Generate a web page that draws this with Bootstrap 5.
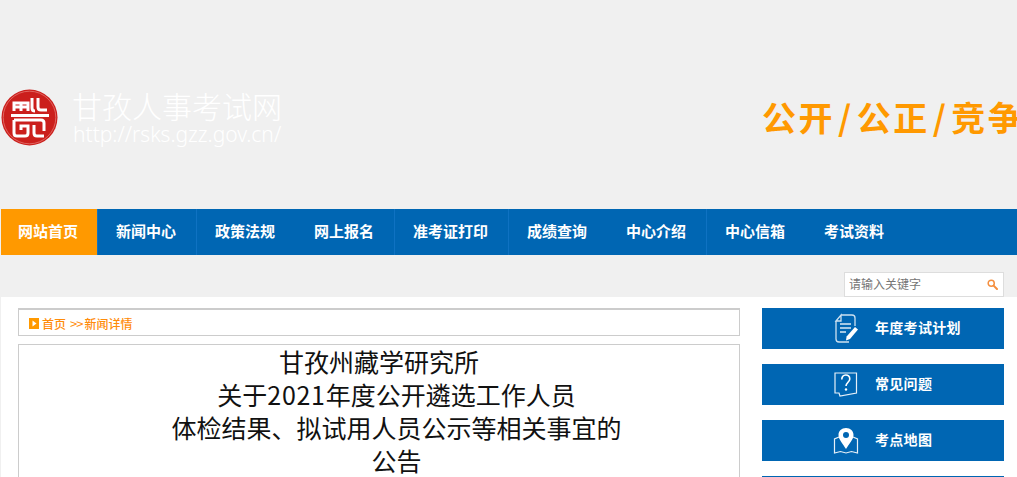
<!DOCTYPE html>
<html>
<head>
    <meta charset="utf-8">
    <title>甘孜人事考试网</title>
    <link rel="stylesheet" href="https://cdn.jsdelivr.net/npm/bootstrap@5.3.0/dist/css/bootstrap.min.css">
    <style>
        html, body { overflow: hidden; height: 100%; }
        body { background: #f0f0f0; font-family: "Liberation Sans", "Noto Sans CJK SC", sans-serif; }
        .site-head { height: 209px; padding: 89px 0 0 1px; overflow: hidden; }
        .site-logo { width: 57px; height: 57px; flex: none; }
        .site-name { width: 209px; flex: none; margin-left: 16px; color: #fff; line-height: 1; }
        .site-name-cn { font-family: "Noto Sans CJK SC", sans-serif; font-size: 30px; font-weight: 300; line-height: 34px; margin: -1px 0 0 -2px; white-space: nowrap; }
        .site-name-url { font-family: "Noto Sans", sans-serif; font-size: 21px; font-weight: 300; line-height: 24px; white-space: nowrap; margin-left: -1px; }
        .site-slogan { flex: none; margin: 1px 0 0 479px; color: #ff9900; font-family: "Noto Sans CJK SC", sans-serif; font-weight: 700; font-size: 34px; line-height: 54px; letter-spacing: 2.5px; white-space: nowrap; }
        .slogan-sep { margin: 0 3px; }
        .main-nav { height: 46px; margin-left: 1px; background: #0066b3; }
        .main-nav a { display: block; padding: 0 20px 0 18px; line-height: 44px; color: #fff; font-family: "Noto Sans CJK SC", sans-serif; font-weight: 700; font-size: 15px; text-decoration: none; white-space: nowrap; box-sizing: border-box; border-left: 1px solid transparent; }
        .main-nav a.is-home { background: #ff9900; padding: 0 19px 0 17px; width: 96px; border-left: 0; }
        .main-nav a.has-line { border-left-color: #0f72c2; }
        .search-band { height: 42px; padding: 17px 13px 0 0; }
        .search-box { width: 160px; height: 25px; background: #fff; border: 1px solid #ddd; padding: 0 5px 0 4px; }
        .search-box input { border: 0; outline: 0; width: 130px; padding: 0 0 2px; background: transparent; font-family: "Noto Sans CJK SC", sans-serif; font-size: 12px; line-height: 21px; color: #666; }
        .search-box input::placeholder { color: #757575; opacity: 1; }
        .page-body { margin-left: 1px; background: #fff; padding: 11px 13px 0 17px; height: 400px; }
        .page-left { width: 722px; flex: none; }
        .page-right { width: 242px; flex: none; margin-left: 22px; }
        .crumbs { height: 28px; border: 1px solid #ccc; border-top-width: 2px; padding: 2px 0 0 10px; color: #ff8c0a; font-family: "Noto Sans CJK SC", sans-serif; font-size: 12px; font-weight: 500; margin-bottom: 8px; }
        .crumbs-mark { width: 10px; height: 11px; flex: none; margin-right: 3px; }
        .crumbs-sep { margin: 0 2px 0 4px; letter-spacing: -1px; font-size: 13px; font-weight: 400; }
        .article-box { border: 1px solid #ccc; height: 300px; padding: 0 0 0 35px; }
        .article-title { font-family: "Noto Sans CJK SC", sans-serif; font-size: 25px; font-weight: 400; line-height: 33px; color: #111; text-align: center; margin: 0; }
        .title-pad { display: inline-block; width: 35px; }
        .title-num { letter-spacing: .7px; }
        .side-btn { height: 41px; background: #0066b3; color: #fff; margin-bottom: 15px; padding: 0 0 2px 71px; font-family: "Noto Sans CJK SC", sans-serif; font-size: 14px; font-weight: 700; letter-spacing: .3px; text-decoration: none; }
        .side-btn svg { width: 26px; height: 30px; flex: none; margin-right: 16px; }
    </style>
</head>
<body>
    <header class="site-head d-flex align-items-start">
        <svg class="site-logo" viewBox="0 0 57 57">
            <circle cx="28.500" cy="28.500" r="28" fill="#cb1f1c"/>
            <circle cx="28.500" cy="28.500" r="26.300" fill="none" stroke="#e8827c" stroke-width=".7"/>
            <g fill="none" stroke="#fff" stroke-width="3">
                <path d="M13 22v-8h14v8M13 18h14M20 13v9"/>
                <path d="M31 9v10c0 2 1 3 3 3M37 9v9c0 2 1 3 3 3h6"/>
                <path d="M10 26.500h38"/>
                <path d="M13 31h27c2 0 3 1 3 3v8"/>
                <path d="M13 31v13c0 2 1 3 3 3h8c2 0 3-1 3-3v-7h-7v4"/>
                <path d="M33 36v8c0 2 1 3 3 3h7"/>
            </g>
        </svg>
        <div class="site-name">
            <div class="site-name-cn">甘孜人事考试网</div>
            <div class="site-name-url">http://rsks.gzz.gov.cn/</div>
        </div>
        <div class="site-slogan">公开<span class="slogan-sep">/</span>公正<span class="slogan-sep">/</span>竞争</div>
    </header>

    <nav class="main-nav d-flex">
        <a class="is-home" href="#">网站首页</a>
        <a class="has-line" href="#">新闻中心</a>
        <a class="has-line" href="#">政策法规</a>
        <a href="#">网上报名</a>
        <a class="has-line" href="#">准考证打印</a>
        <a class="has-line" href="#">成绩查询</a>
        <a href="#">中心介绍</a>
        <a class="has-line" href="#">中心信箱</a>
        <a href="#">考试资料</a>
    </nav>

    <div class="search-band d-flex justify-content-end">
        <div class="search-box d-flex align-items-center justify-content-between">
            <input type="text" placeholder="请输入关键字">
            <svg width="11" height="11" viewBox="0 0 13 13">
                <circle cx="5" cy="5" r="3.600" fill="none" stroke="#f58f3f" stroke-width="1.800"/>
                <path d="M7.800 7.800l4 4" stroke="#f58f3f" stroke-width="2.400" stroke-linecap="round"/>
            </svg>
        </div>
    </div>

    <div class="page-body d-flex align-items-start">
        <div class="page-left">
            <div class="crumbs d-flex align-items-center">
                <svg class="crumbs-mark" viewBox="0 0 10 11"><rect width="10" height="11" fill="#ff9900"/><path d="M3.500 2.500l4 3-4 3z" fill="#fff"/></svg>
                <span>首页</span>
                <span class="crumbs-sep">&gt;&gt;</span>
                <span>新闻详情</span>
            </div>
            <div class="article-box">
                <h1 class="article-title">甘孜州藏学研究所<span class="title-pad"></span><br>关于<span class="title-num">2021</span>年度公开遴选工作人员<br>体检结果、拟试用人员公示等相关事宜的<br>公告</h1>
            </div>
        </div>
        <div class="page-right">
            <a class="side-btn d-flex align-items-center" href="#">
                <svg viewBox="0 0 26 30" fill="none" stroke="#fff">
                    <path d="M8 2h11c2 0 3 1 3 3v8M3 8l5-6v6H3zM3 8v18c0 2 1 3 3 3h10" stroke-width="1.300" opacity=".8"/>
                    <path d="M7 11h11M7 15h11M7 19h6" stroke-width="1.400" opacity=".85"/>
                    <path d="M22 14l3 2.500-8 9.500-4 1.500.6-4z" fill="#fff" stroke="none"/>
                </svg>
                <span>年度考试计划</span>
            </a>
            <a class="side-btn d-flex align-items-center" href="#">
                <svg viewBox="0 0 26 30" fill="none" stroke="#fff">
                    <path d="M2 4h21.500v20L7 27l-1-3H2z" stroke-width="1.200" opacity=".9"/>
                    <path d="M8.800 10.500c0-6 8-6 8-.5 0 3-3.800 3.500-3.800 7" stroke-width="1.600"/>
                    <circle cx="13" cy="20.500" r="1.200" fill="#fff" stroke="none"/>
                </svg>
                <span>常见问题</span>
            </a>
            <a class="side-btn d-flex align-items-center" href="#">
                <svg viewBox="0 0 26 30" fill="none" stroke="#fff">
                    <path d="M6 12L1.500 14v14l6-1.500 5.500 1.500 5.500-1.500 6 1.500V14l-4.500-2" stroke-width="1.200" opacity=".9"/>
                    <path d="M13 3c-4.500 0-7.500 3-7.500 7 0 4.500 4.500 9 7.500 14 3-5 7.500-9.500 7.500-14 0-4-3-7-7.500-7z" fill="#fff" stroke="none"/>
                    <circle cx="13" cy="10" r="3" fill="#0066b3" stroke="none"/>
                </svg>
                <span>考点地图</span>
            </a>
            <div class="side-btn"></div>
        </div>
    </div>
    <script src="https://cdn.jsdelivr.net/npm/bootstrap@5.3.0/dist/js/bootstrap.bundle.min.js"></script>
</body>
</html>
